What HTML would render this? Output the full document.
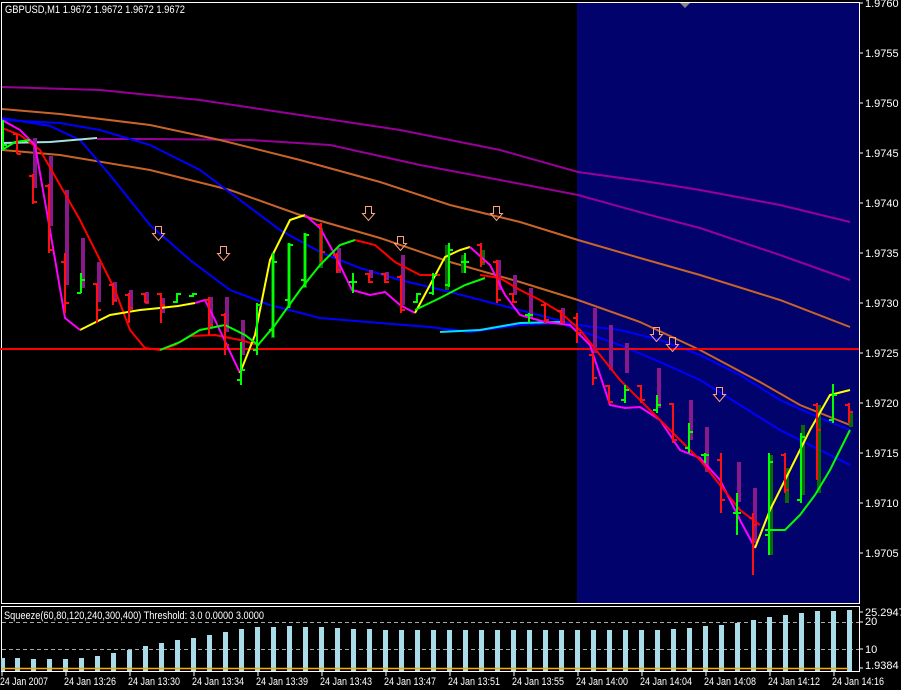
<!DOCTYPE html>
<html><head><meta charset="utf-8"><style>
html,body{margin:0;padding:0;background:#000;width:901px;height:690px;overflow:hidden}
svg{display:block}
text{font-family:"Liberation Sans",sans-serif;font-size:11px;fill:#fff}
</style></head><body>
<svg width="901" height="690" viewBox="0 0 901 690" xmlns="http://www.w3.org/2000/svg">
<rect width="901" height="690" fill="#000"/>
<rect x="577" y="3" width="282" height="600" fill="#02026c"/>
<path d="M1.5 2.5H859.5V603.5H1.5Z M1.5 606.5H859.5V671.5H1.5Z" fill="none" stroke="#fff" stroke-width="1"/>
<polygon points="680,3 690,3 685,8" fill="#888"/>
<g fill="none" stroke-width="2">
<polyline stroke="#990099" points="2,87 100,90 200,100 300,115 400,130 500,150 578,172 650,182 700,190 780,205 850,222"/>
<polyline stroke="#990099" points="97,139 150,139 250,140 330,145 420,165 500,180 578,195 650,215 700,228 780,255 850,280"/>
<polyline stroke="#c8642a" points="2,109 60,114 150,125 220,140 300,160 380,182 450,205 520,222 578,240 640,258 700,275 780,300 850,327"/>
<polyline stroke="#c8642a" points="2,150 60,155 150,170 230,190 300,215 380,238 450,262 520,282 578,300 640,322 700,350 760,382 800,405 850,425"/>
<polyline stroke="#0000ff" points="2,120 60,123 100,130 150,145 200,170 240,200 280,230 320,252 360,268 400,280 450,292 500,305 550,318 578,325 620,330 660,340 700,355 740,375 780,400 820,418 850,430"/>
<polyline stroke="#0000ff" points="2,118 50,126 80,140 110,175 150,225 190,260 230,290 270,305 320,318 380,323 430,327 470,332 520,325 560,323 578,330 620,345 660,362 700,380 740,405 780,430 820,450 850,465"/>
<polyline stroke="#a8e0e0" points="2,143 50,142 97,138"/>
<polyline stroke="#00e0ff" points="440,332 480,330 520,323 560,322"/>
<polyline stroke="#ff0000" points="0,349 859,349"/>
</g>
<g fill="#8a1a8a">
<rect x="33" y="138" width="4" height="50"/><rect x="49" y="156" width="4" height="70"/><rect x="65" y="190" width="4" height="95"/><rect x="81" y="238" width="4" height="50"/>
<rect x="97" y="262" width="4" height="40"/><rect x="113" y="282" width="4" height="20"/><rect x="129" y="290" width="4" height="20"/><rect x="145" y="292" width="4" height="12"/>
<rect x="161" y="298" width="4" height="15"/><rect x="209" y="297" width="4" height="30"/><rect x="225" y="297" width="4" height="35"/><rect x="241" y="320" width="4" height="35"/>
<rect x="337" y="248" width="4" height="25"/><rect x="369" y="270" width="4" height="8"/><rect x="385" y="272" width="4" height="8"/><rect x="401" y="255" width="4" height="50"/>
<rect x="497" y="260" width="4" height="30"/><rect x="513" y="275" width="4" height="20"/><rect x="529" y="288" width="4" height="30"/><rect x="561" y="308" width="4" height="15"/>
<rect x="593" y="308" width="4" height="45"/><rect x="609" y="325" width="4" height="45"/><rect x="625" y="343" width="4" height="30"/><rect x="657" y="368" width="4" height="40"/>
<rect x="689" y="400" width="4" height="40"/><rect x="705" y="427" width="4" height="45"/><rect x="737" y="462" width="4" height="40"/><rect x="753" y="488" width="4" height="55"/>
</g>
<g fill="#0a6a0a">
<rect x="271" y="253" width="4" height="85"/><rect x="287" y="243" width="4" height="65"/><rect x="303" y="233" width="4" height="55"/><rect x="319" y="228" width="4" height="40"/>
<rect x="445" y="245" width="4" height="45"/><rect x="461" y="255" width="4" height="18"/><rect x="481" y="250" width="4" height="15"/>
<rect x="769" y="455" width="4" height="100"/><rect x="785" y="468" width="4" height="35"/><rect x="801" y="425" width="4" height="70"/><rect x="817" y="405" width="4" height="88"/><rect x="849" y="412" width="4" height="15"/>
</g>
<g fill="none" stroke-width="2">
<polyline stroke="#ff0000" points="2,128 20,135 40,150 60,185 80,220 100,260 115,290 130,330 145,348 160,350 175,345 190,336 215,335 240,340 258,345"/>
<polyline stroke="#ffff00" points="80,330 110,315 140,310 160,308 178,306 195,303"/>
<polyline stroke="#ff00ff" points="2,120 20,130 35,145 50,230 65,318 80,330"/>
<polyline stroke="#ff00ff" points="195,303 205,300 215,320 240,373"/>
<polyline stroke="#ffff00" points="240,373 255,335 270,260 290,220 305,215"/>
<polyline stroke="#ff00ff" points="305,215 320,228 335,255 352,290 370,295 385,292 400,305 415,313"/>
<polyline stroke="#ffff00" points="415,313 430,285 445,257 460,250 470,247"/>
<polyline stroke="#ff00ff" points="470,247 490,265 505,295 520,315 545,322 570,325 590,345 610,405 625,408 640,407 660,420 680,450 700,458 720,480 740,520 755,548"/>
<polyline stroke="#ffff00" points="755,548 770,510 790,470 810,430 830,395 850,390"/>
<polyline stroke="#00ff00" points="2,150 15,142 30,140"/>
<polyline stroke="#00ff00" points="160,350 180,342 200,330 225,325 245,335 258,345 275,325 300,290 320,265 340,245 355,240"/>
<polyline stroke="#ff0000" points="355,240 375,245 395,262 420,275 440,275"/>
<polyline stroke="#00ff00" points="415,310 440,298 465,285 485,278"/>
<polyline stroke="#ff0000" points="480,275 500,278 520,290 540,300 560,312 580,330 600,355 620,380 640,400 660,420 680,440 700,460 720,485 740,510 760,525"/>
<polyline stroke="#00ff00" points="765,530 785,530 800,515 815,495 830,470 850,430"/>
</g>
<g fill="none" stroke-width="2" stroke="#ff1010">
<path d="M17 134V154M13 134H17M17 154H21 M33 174V204M29 176H33M33 202H37 M49 184V253M45 186H49M49 250H53 M65 253V313M61 262H65M65 303H69 M97 283V323M93 284H97M97 310H101 M113 283V305M109 285H113M113 300H117 M129 293V323M125 295H129M129 308H133 M145 293V303M141 294H145M145 302H149 M161 293V323M157 294H161M161 305H165 M209 297V335M205 300H209M209 325H213 M225 313V355M221 315H225M225 345H229 M321 223V262M317 225H321M321 252H325 M337 253V273M333 255H337M337 270H341 M369 273V283M365 274H369M369 282H373 M385 273V283M381 274H385M385 282H389 M401 275V313M397 277H401M401 310H405 M481 243V267M477 245H481M481 262H485 M497 260V303M493 262H497M497 300H501 M513 293V303M509 294H513M513 302H517 M545 303V323M541 305H545M545 320H549 M561 310V323M557 311H561M561 322H565 M577 313V343M573 318H577M577 333H581 M593 353V385M589 355H593M593 378H597 M609 385V403M605 386H609M609 402H613 M641 385V403M637 386H641M641 400H645 M673 403V443M669 404H673M673 440H677 M721 453V513M717 460H721M721 500H725 M753 513V575M749 518H753M753 525H757 M785 453V493M781 455H785M785 490H789 M817 403V480M813 405H817M817 430H821 M849 403V423M845 405H849M849 412H853"/>
</g>
<g fill="none" stroke-width="2" stroke="#00ff00">
<path d="M3 120V150M3 145H7 M81 273V293M77 293H81M81 280H85 M177 293V303M173 302H177M177 294H181 M193 293V297M189 296H193M193 294H197 M241 342V385M237 380H241M241 370H245 M257 303V355M253 350H257M257 305H261 M273 253V337M269 330H273M273 262H277 M289 243V308M285 300H289M289 245H293 M305 233V287M301 280H305M305 235H309 M353 273V293M349 282H357 M417 293V303M413 302H417M417 294H421 M433 273V295M429 293H433M433 275H437 M449 243V287M445 285H449M449 250H453 M465 253V273M461 262H469 M529 313V323M525 315H533 M625 385V403M621 400H625M625 390H629 M657 395V413M653 410H657M657 405H661 M689 423V453M685 448H689M689 432H693 M705 453V463M701 455H709 M737 493V535M733 513H741 M769 453V555M765 535H769M769 462H773 M801 433V503M797 500H801M801 437H805 M833 384V423M829 420H833M833 395H837"/>
</g>
<g fill="none" stroke="#ffa080" stroke-width="1">
<path d="M155.5 226.5h6v7h3l-6 7-6-7h3z"/>
<path d="M220.5 246.5h6v7h3l-6 7-6-7h3z"/>
<path d="M365.5 206.5h6v7h3l-6 7-6-7h3z"/>
<path d="M397.5 236.5h6v7h3l-6 7-6-7h3z"/>
<path d="M493.5 206.5h6v7h3l-6 7-6-7h3z"/>
<path d="M653.5 327.5h6v7h3l-6 7-6-7h3z"/>
<path d="M669.5 337.5h6v7h3l-6 7-6-7h3z"/>
<path d="M716.5 387.5h6v7h3l-6 7-6-7h3z"/>
</g>
<text x="5" y="13" textLength="180" lengthAdjust="spacingAndGlyphs">GBPUSD,M1  1.9672 1.9672 1.9672 1.9672</text>
<g stroke="#fff"><path d="M859 3H863M859 53H863M859 103H863M859 153H863M859 203H863M859 253H863M859 303H863M859 353H863M859 403H863M859 453H863M859 503H863M859 553H863"/></g>
<g>
<text x="865" y="7">1.9760</text><text x="865" y="57">1.9755</text><text x="865" y="107">1.9750</text><text x="865" y="157">1.9745</text><text x="865" y="207">1.9740</text><text x="865" y="257">1.9735</text><text x="865" y="307">1.9730</text><text x="865" y="357">1.9725</text><text x="865" y="407">1.9720</text><text x="865" y="457">1.9715</text><text x="865" y="507">1.9710</text><text x="865" y="557">1.9705</text>
</g>
<text x="4" y="619" textLength="260" lengthAdjust="spacingAndGlyphs">Squeeze(60,80,120,240,300,400) Threshold: 3.0 0.0000 3.0000</text>
<path d="M2 622.5H859M2 649.5H859" stroke="#aaa" stroke-dasharray="4,3"/>
<g fill="#a8dce8">
<rect x="1" y="658" width="4" height="13"/><rect x="15" y="658" width="5" height="13"/><rect x="31" y="659" width="5" height="12"/><rect x="47" y="659" width="5" height="12"/><rect x="63" y="659" width="5" height="12"/><rect x="79" y="658" width="5" height="13"/><rect x="95" y="656" width="5" height="15"/><rect x="111" y="653" width="5" height="18"/><rect x="127" y="650" width="5" height="21"/><rect x="143" y="646" width="5" height="25"/><rect x="159" y="643" width="5" height="28"/><rect x="175" y="640" width="5" height="31"/><rect x="191" y="638" width="5" height="33"/><rect x="207" y="635" width="5" height="36"/><rect x="223" y="632" width="5" height="39"/><rect x="239" y="629" width="5" height="42"/><rect x="255" y="627" width="5" height="44"/><rect x="271" y="627" width="5" height="44"/><rect x="287" y="626" width="5" height="45"/><rect x="303" y="627" width="5" height="44"/><rect x="319" y="627" width="5" height="44"/><rect x="335" y="628" width="5" height="43"/><rect x="351" y="629" width="5" height="42"/><rect x="367" y="629" width="5" height="42"/><rect x="383" y="630" width="5" height="41"/><rect x="399" y="630" width="5" height="41"/><rect x="415" y="630" width="5" height="41"/><rect x="431" y="630" width="5" height="41"/><rect x="447" y="630" width="5" height="41"/><rect x="463" y="630" width="5" height="41"/><rect x="479" y="630" width="5" height="41"/><rect x="495" y="630" width="5" height="41"/><rect x="511" y="630" width="5" height="41"/><rect x="527" y="630" width="5" height="41"/><rect x="543" y="630" width="5" height="41"/><rect x="559" y="630" width="5" height="41"/><rect x="575" y="630" width="5" height="41"/><rect x="591" y="630" width="5" height="41"/><rect x="607" y="630" width="5" height="41"/><rect x="623" y="630" width="5" height="41"/><rect x="639" y="630" width="5" height="41"/><rect x="655" y="630" width="5" height="41"/><rect x="671" y="629" width="5" height="42"/><rect x="687" y="628" width="5" height="43"/><rect x="703" y="626" width="5" height="45"/><rect x="719" y="625" width="5" height="46"/><rect x="735" y="623" width="5" height="48"/><rect x="751" y="620" width="5" height="51"/><rect x="767" y="617" width="5" height="54"/><rect x="783" y="615" width="5" height="56"/><rect x="799" y="613" width="5" height="58"/><rect x="815" y="611" width="5" height="60"/><rect x="831" y="611" width="5" height="60"/><rect x="847" y="610" width="5" height="61"/>
</g>
<path d="M2 668.5H848" stroke="#ffaa00" stroke-width="1.5"/>
<g stroke="#fff"><path d="M859 612H863M859 622H863M859 649H863M859 668H863"/></g>
<text x="865" y="616">25.2947</text><text x="865" y="625">20</text><text x="865" y="653">10</text><text x="865" y="669">1.9384</text>
<g stroke="#fff"><path d="M2 671V676M66 671V676M130 671V676M194 671V676M258 671V676M322 671V676M386 671V676M450 671V676M514 671V676M578 671V676M642 671V676M706 671V676M770 671V676M834 671V676"/></g>
<g>
<text x="0" y="685" textLength="48" lengthAdjust="spacingAndGlyphs">24 Jan 2007</text><text x="64" y="685" textLength="52" lengthAdjust="spacingAndGlyphs">24 Jan 13:26</text><text x="128" y="685" textLength="52" lengthAdjust="spacingAndGlyphs">24 Jan 13:30</text><text x="192" y="685" textLength="52" lengthAdjust="spacingAndGlyphs">24 Jan 13:34</text><text x="256" y="685" textLength="52" lengthAdjust="spacingAndGlyphs">24 Jan 13:39</text><text x="320" y="685" textLength="52" lengthAdjust="spacingAndGlyphs">24 Jan 13:43</text><text x="384" y="685" textLength="52" lengthAdjust="spacingAndGlyphs">24 Jan 13:47</text><text x="448" y="685" textLength="52" lengthAdjust="spacingAndGlyphs">24 Jan 13:51</text><text x="512" y="685" textLength="52" lengthAdjust="spacingAndGlyphs">24 Jan 13:55</text><text x="576" y="685" textLength="52" lengthAdjust="spacingAndGlyphs">24 Jan 14:00</text><text x="640" y="685" textLength="52" lengthAdjust="spacingAndGlyphs">24 Jan 14:04</text><text x="704" y="685" textLength="52" lengthAdjust="spacingAndGlyphs">24 Jan 14:08</text><text x="768" y="685" textLength="52" lengthAdjust="spacingAndGlyphs">24 Jan 14:12</text><text x="832" y="685" textLength="52" lengthAdjust="spacingAndGlyphs">24 Jan 14:16</text>
</g>
</svg>
</body></html>
